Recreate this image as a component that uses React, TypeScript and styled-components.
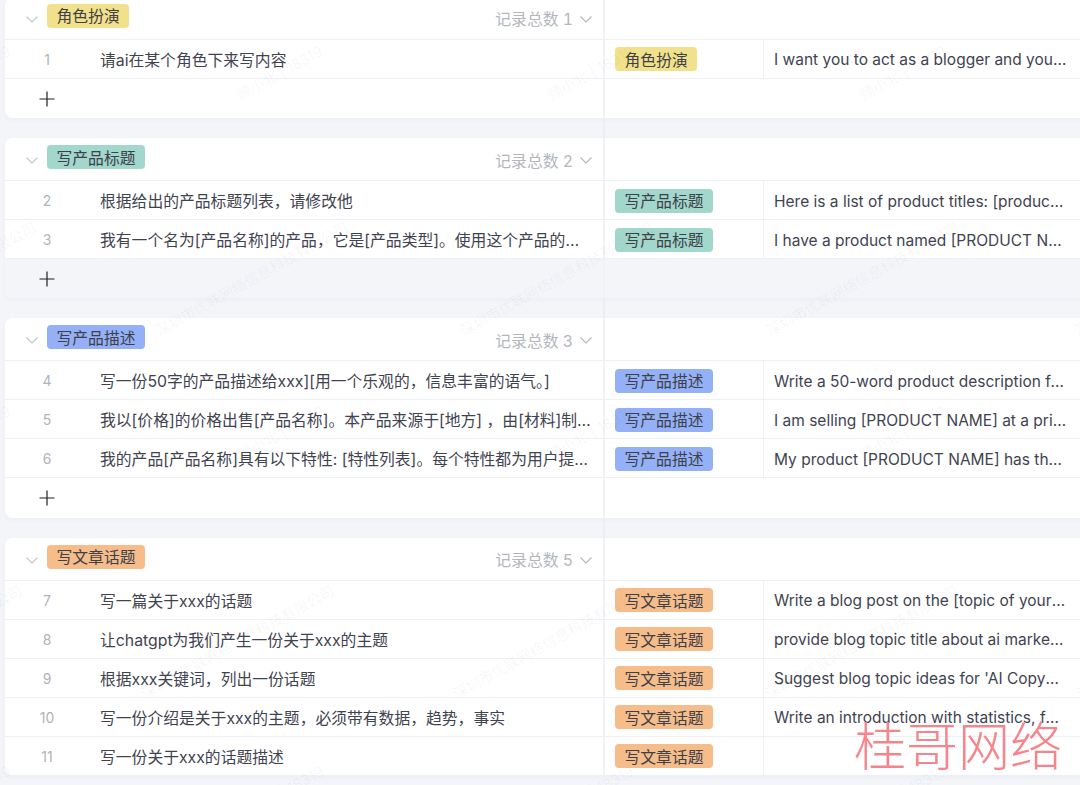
import React from "react";
import styled, { createGlobalStyle } from "styled-components";

const Global = createGlobalStyle`
  html, body { margin: 0; padding: 0; background: #f4f5f9; }
  body { font-family: Inter, "Noto Sans CJK SC", sans-serif; }
`;

const Page = styled.div`
  position: relative;
  width: 1080px;
  height: 785px;
  overflow: hidden;
  padding-left: 5px;
  box-sizing: border-box;
  background: #f4f5f9;
`;
const Stack = styled.div`
  display: flex;
  flex-direction: column;
  margin-top: -3.33px;
`;
const Card = styled.section`
  background: #fff;
  border-radius: 8px 0 0 8px;
  box-shadow: 0 2px 4px rgba(60, 70, 110, 0.04);
`;
const Head = styled.div`
  display: grid;
  grid-template-columns: 600px 1fr;
  height: 42px;
  border-bottom: 1px solid #eef0f4;
  box-sizing: content-box;
`;
const HeadLeft = styled.div`
  display: flex;
  align-items: center;
  padding: 0 10px 4px 20px;
  border-right: 2px solid #f0f2f7;
  box-sizing: border-box;
  min-width: 0;
`;
const Chevron = styled.svg<{ $drop?: boolean }>`
  width: 14px;
  height: 14px;
  flex: none;
  fill: none;
  stroke: ${(p) => (p.$drop ? "#c2c5cb" : "#b4b7be")};
  stroke-width: 1.1;
  margin-top: ${(p) => (p.$drop ? "6px" : "0")};
`;
const HeadTag = styled.span<{ $bg: string }>`
  margin-left: 8px;
  height: 24px;
  padding: 0 9.5px;
  display: inline-flex;
  align-items: center;
  border-radius: 4px;
  background: ${(p) => p.$bg};
  color: #3d4049;
  font-size: 15.8px;
  white-space: nowrap;
`;
const Count = styled.span`
  margin-left: auto;
  display: inline-flex;
  align-items: center;
  color: #b3b6bd;
  font-size: 15.8px;
  font-variant-numeric: tabular-nums;
  gap: 6px;
  padding-top: 6px;
`;
const Row = styled.div`
  display: grid;
  grid-template-columns: 95px 505px 159px 1fr;
  height: 38px;
  border-bottom: 1px solid #eef0f4;
  box-sizing: content-box;
`;
const Num = styled.div`
  display: flex;
  align-items: center;
  justify-content: center;
  padding: 1px 11px 0 0;
  color: #b0b3ba;
  font-size: 14px;
  font-family: Inter, sans-serif;
`;
const Title = styled.div`
  display: flex;
  align-items: center;
  padding: 1px 10px 0 0;
  border-right: 2px solid #f0f2f7;
  color: #3f4350;
  font-size: 15.8px;
  min-width: 0;
  box-sizing: border-box;
`;
const Clip = styled.span`
  overflow: hidden;
  white-space: nowrap;
  text-overflow: ellipsis;
`;
const TagCell = styled.div`
  display: flex;
  align-items: center;
  padding: 1px 0 0 10px;
  border-right: 1px solid #eef0f4;
  box-sizing: border-box;
`;
const RowTag = styled.span<{ $bg: string }>`
  height: 24px;
  padding: 0 9.5px;
  display: inline-flex;
  align-items: center;
  border-radius: 4px;
  background: ${(p) => p.$bg};
  color: #3d4049;
  font-size: 15.8px;
  white-space: nowrap;
`;
const Prompt = styled.div`
  display: flex;
  align-items: center;
  padding: 2px 13px 0 10px;
  color: #3f4350;
  font-size: 15.5px;
  min-width: 0;
`;
const AddRow = styled.div<{ $hover?: boolean }>`
  display: grid;
  grid-template-columns: 600px 1fr;
  height: 39.33px;
  border-radius: 0 0 0 8px;
  background: ${(p) => (p.$hover ? "#f4f5f9" : "#fff")};
`;
const AddCell = styled.div`
  display: flex;
  align-items: center;
  padding: 1px 0 0 34px;
  border-right: 2px solid #f0f2f7;
  box-sizing: border-box;
`;
const Plus = styled.svg`
  width: 16px;
  height: 16px;
  stroke: #1f2126;
  stroke-width: 1.2;
  fill: none;
`;
const Gap = styled.div`
  display: grid;
  grid-template-columns: 600px 1fr;
  height: 20px;
`;
const GapCell = styled.div`
  border-right: 2px solid #eceef4;
`;
const Overlay = styled.div`
  position: absolute;
  inset: 0;
  pointer-events: none;
`;
const Mark = styled.span<{ $x: number; $y: number }>`
  position: absolute;
  left: ${(p) => p.$x}px;
  top: ${(p) => p.$y}px;
  transform: translate(-50%, -50%) rotate(-29deg);
  color: rgba(70, 75, 95, 0.06);
  font-size: 14.5px;
  white-space: nowrap;
`;
const Stamp = styled.div`
  position: absolute;
  left: 854px;
  top: 708px;
  color: #f6858b;
  font-family: "Noto Sans CJK SC", sans-serif;
  font-size: 52px;
  font-weight: 300;
  line-height: 72px;
  white-space: nowrap;
`;

const Y = "#f1e18a", G = "#a2d7cc", B = "#94b0f6", O = "#f6bd8a";
type Item = { n: number; t: string; p: string };
type Group = { name: string; color: string; hover?: boolean; noAdd?: boolean; total: number; items: Item[] };

const groups: Group[] = [
  { name: "角色扮演", color: Y, total: 1, items: [
    { n: 1, t: "请ai在某个角色下来写内容", p: "I want you to act as a blogger and you are writing a post" },
  ]},
  { name: "写产品标题", color: G, total: 2, hover: true, items: [
    { n: 2, t: "根据给出的产品标题列表，请修改他", p: "Here is a list of product titles: [product titles]. Please edit" },
    { n: 3, t: "我有一个名为[产品名称]的产品，它是[产品类型]。使用这个产品的关键词写一个标题", p: "I have a product named [PRODUCT NAME], it is a product type" },
  ]},
  { name: "写产品描述", color: B, total: 3, items: [
    { n: 4, t: "写一份50字的产品描述给xxx][用一个乐观的，信息丰富的语气。]", p: "Write a 50-word product description for xxx in an upbeat tone" },
    { n: 5, t: "我以[价格]的价格出售[产品名称]。本产品来源于[地方] ，由[材料]制成，适合所有人使用", p: "I am selling [PRODUCT NAME] at a price of [PRICE] from here" },
    { n: 6, t: "我的产品[产品名称]具有以下特性: [特性列表]。每个特性都为用户提供了很多好处", p: "My product [PRODUCT NAME] has the following features here" },
  ]},
  { name: "写文章话题", color: O, total: 5, noAdd: true, items: [
    { n: 7, t: "写一篇关于xxx的话题", p: "Write a blog post on the [topic of your choice] for readers" },
    { n: 8, t: "让chatgpt为我们产生一份关于xxx的主题", p: "provide blog topic title about ai marketing for my readers" },
    { n: 9, t: "根据xxx关键词，列出一份话题", p: "Suggest blog topic ideas for 'AI Copywriting' keywords now" },
    { n: 10, t: "写一份介绍是关于xxx的主题，必须带有数据，趋势，事实", p: "Write an introduction with statistics, facts and some trends" },
    { n: 11, t: "写一份关于xxx的话题描述", p: "" },
  ]},
];

const NAME = "顾小北 | 18319";
const CO = "深圳市优联网络信息科技有限公司";
const marks: [number, number, string][] = [
  [-33, 72, NAME], [279, 72, NAME], [590, 72, NAME], [902, 72, NAME],
  [-61, 278, CO], [251, 278, CO], [556, 278, CO], [862, 278, CO], [1170, 278, CO],
  [-33, 432, NAME], [280, 432, NAME], [590, 432, NAME], [902, 432, NAME],
  [-75, 641, CO], [237, 641, CO], [549, 641, CO], [861, 641, CO], [1173, 641, CO],
  [-33, 792, NAME], [280, 792, NAME], [590, 792, NAME], [902, 792, NAME],
];

const Down = ({ drop }: { drop?: boolean }) => (
  <Chevron viewBox="0 0 14 14" $drop={drop}><path d="M1.5 4.5 7 10l5.5-5.5" /></Chevron>
);

export default function App() {
  return (
    <Page>
      <Global />
      <Stack>
        {groups.map((g, i) => (
          <React.Fragment key={g.name}>
            <Card>
              <Head>
                <HeadLeft>
                  <Down drop />
                  <HeadTag $bg={g.color}>{g.name}</HeadTag>
                  <Count>记录总数 {g.total}<Down /></Count>
                </HeadLeft>
                <div />
              </Head>
              {g.items.map((it) => (
                <Row key={it.n}>
                  <Num>{it.n}</Num>
                  <Title><Clip>{it.t}</Clip></Title>
                  <TagCell><RowTag $bg={g.color}>{g.name}</RowTag></TagCell>
                  <Prompt><Clip>{it.p}</Clip></Prompt>
                </Row>
              ))}
              {!g.noAdd && (
                <AddRow $hover={g.hover}>
                  <AddCell>
                    <Plus viewBox="0 0 16 16"><path d="M8 .5v15M.5 8h15" /></Plus>
                  </AddCell>
                  <div />
                </AddRow>
              )}
            </Card>
            {i < groups.length - 1 && <Gap><GapCell /><div /></Gap>}
          </React.Fragment>
        ))}
      </Stack>
      <Overlay>
        {marks.map(([x, y, t], i) => <Mark key={i} $x={x} $y={y}>{t}</Mark>)}
      </Overlay>
      <Stamp>桂哥网络</Stamp>
    </Page>
  );
}
